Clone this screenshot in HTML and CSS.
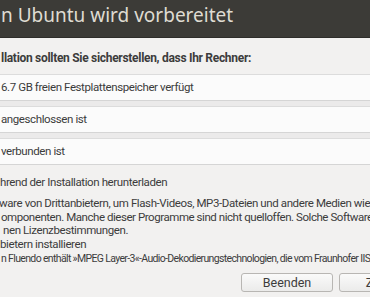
FILE: index.html
```html
<!DOCTYPE html>
<html lang="de">
<head>
  <meta charset="UTF-8" />
  <title>Ubuntu wird vorbereitet</title>
  <link rel="stylesheet" href="styles.css">
</head>
<body>
  <div class="titlebar">n Ubuntu wird vorbereitet</div>

  <div class="page">
    <p class="intro">llation sollten Sie sicherstellen, dass Ihr Rechner:</p>

    <div class="reqs">
      <div class="req">6.7 GB freien Festplattenspeicher verfügt</div>
      <div class="req">angeschlossen ist</div>
      <div class="req">verbunden ist</div>
    </div>

    <p class="option">hrend der Installation herunterladen</p>

    <p class="desc">
      <span class="l1">ware von Drittanbietern, um Flash-Videos, MP3-Dateien und andere Medien wiedergeben</span>
      <span class="l2">omponenten. Manche dieser Programme sind nicht quelloffen. Solche Software unterliegt</span>
      <span class="l3">nen Lizenzbestimmungen.</span>
    </p>

    <p class="option second">bietern installieren</p>
    <p class="note">n Fluendo enthält »MPEG Layer-3«-Audio-Dekodierungstechnologien, die vom Fraunhofer IIS und</p>

    <div class="actions">
      <button class="btn">Beenden</button>
      <button class="btn">Zurück</button>
    </div>
  </div>
</body>
</html>
```

FILE: styles.css
```css
* { box-sizing: border-box; }
html, body {
  margin: 0;
  padding: 0;
  overflow: hidden;
}
body {
  width: 370px;
  height: 297px;
  font-family: Roboto, 'Noto Sans', sans-serif;
  background: #f2f1f0;
  color: #3c3c3c;
}
.titlebar {
  height: 38px;
  background: #3c3b37;
  color: #dfdbd2;
  font-family: 'Noto Sans', sans-serif;
  font-size: 19px;
  line-height: 30px;
  padding-left: 1px;
  white-space: nowrap;
  border-bottom: 1px solid #2e2d2a;
}
.page {
  font-size: 11.5px;
  letter-spacing: -0.4px;
  white-space: nowrap;
  overflow: hidden;
}
.intro {
  font-size: 12px;
  letter-spacing: -0.3px;
  font-weight: bold;
  margin: 0;
  padding: 12px 0 0 1px;
  height: 36px;
  line-height: 16px;
}
.reqs {
  display: flex;
  flex-direction: column;
  gap: 5px;
  margin: 0 -4px;
  background: #ebeaea;
}
.req {
  height: 27px;
  line-height: 25px;
  padding-left: 5px;
  background: #fbfbfb;
  border-top: 1px solid #dcdcdc;
  border-bottom: 1px solid #d5d5d5;
}
.option {
  margin: 0;
  padding: 9px 0 0 0;
  line-height: 16px;
  height: 30px;
}
.option.second {
  padding: 1px 0 0 0;
  height: 17px;
}
.desc {
  margin: 0;
  padding-top: 2px;
  line-height: 13.5px;
  height: 40px;
}
.desc span {
  display: block;
}
.desc .l1 { margin-left: -1px; }
.desc .l2 { margin-left: 1px; letter-spacing: -0.45px; }
.desc .l3 { margin-left: 3px; }
.note {
  margin: 0;
  font-size: 10.5px;
  letter-spacing: -0.65px;
  line-height: 14px;
  padding-left: 1px;
}
.actions {
  display: flex;
  gap: 6px;
  padding: 7px 0 0 241px;
}
.btn {
  flex: none;
  width: 92px;
  height: 19px;
  font-family: inherit;
  font-size: 12.5px;
  color: #3c3c3c;
  background: linear-gradient(#fafafa, #ebebea);
  border: 1px solid #b8b6b3;
  border-radius: 3px;
  padding: 0;
}
```
